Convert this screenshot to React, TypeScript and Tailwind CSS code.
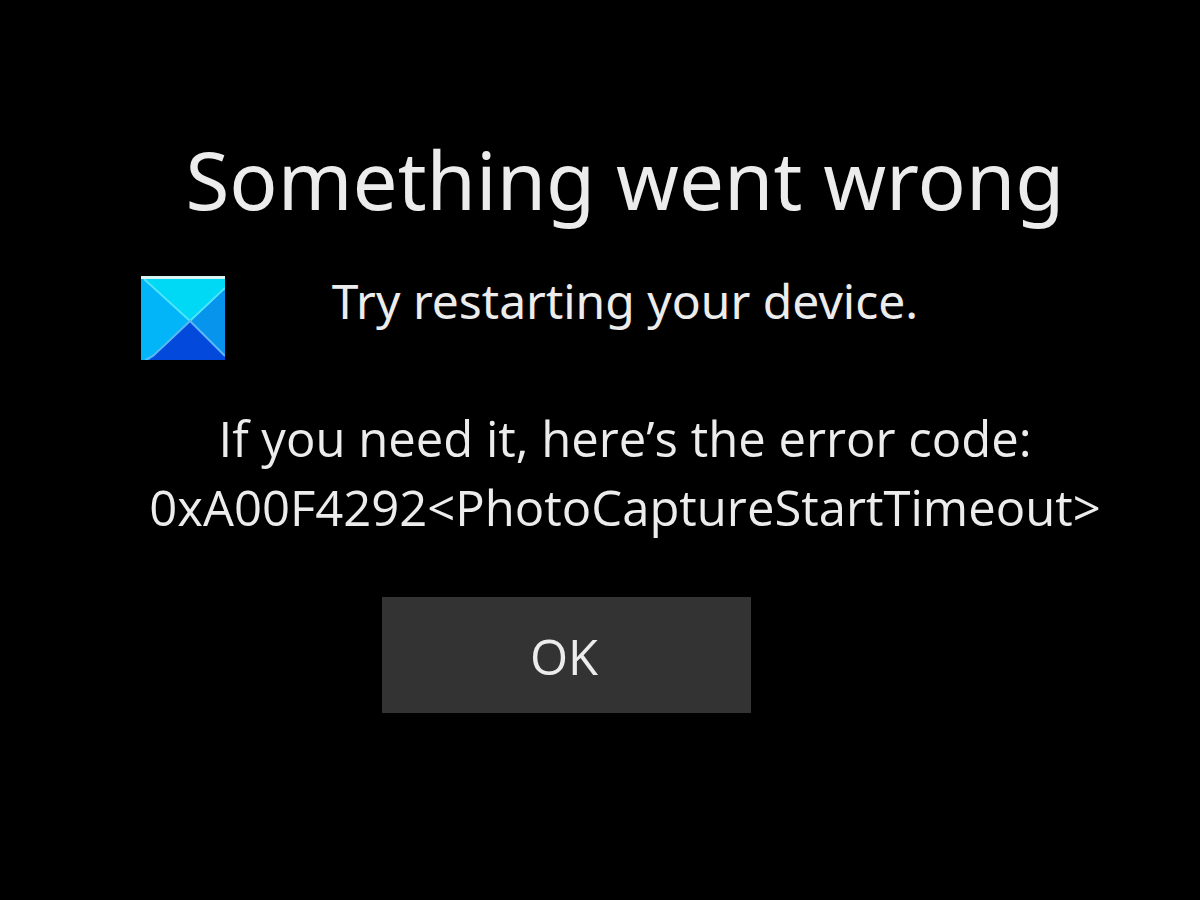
function BrandMark() {
  return (
    <svg viewBox="0 0 84 84" className="h-[84px] w-[84px]" aria-hidden="true">
      <rect width="84" height="84" fill="#02b5f8" />
      <path d="M3 3H84V12L49 45Z" fill="#00d9f6" />
      <path d="M84 12V80L49 45Z" fill="#0794ed" />
      <path d="M49 45L84 80V84H8L28 65Z" fill="#0249dc" />
      <path d="M3 3L49 45L84 12" fill="none" stroke="#50e4fb" strokeWidth="2" />
      <path d="M4 84L12 80L29 64L49 45L84 80" fill="none" stroke="#5cb6f4" strokeWidth="2" />
      <rect width="84" height="3" fill="#d9f3f3" />
    </svg>
  );
}

export default function App() {
  return (
    <main className="flex min-h-screen flex-col items-center bg-black pt-[131px] pl-[50px] font-['Open_Sans','Noto_Sans',sans-serif] text-[#ececec]">
      <h1 className="font-['Noto_Sans','Open_Sans',sans-serif] text-[80px] leading-[96px]">
        Something went wrong
      </h1>
      <div className="mt-[39px] w-full max-w-[968px] text-center text-[49px] leading-[69px]">
        <div className="grid h-[138px] grid-cols-[84px_1fr_84px]">
          <div className="pt-[10px]">
            <BrandMark />
          </div>
          <p className="font-['Noto_Sans','Open_Sans',sans-serif] text-[48px]">
            Try restarting your device.
          </p>
        </div>
        <p>If you need it, here’s the error code:</p>
        <p>0xA00F4292&lt;PhotoCaptureStartTimeout&gt;</p>
      </div>
      <button
        type="button"
        className="mt-[55px] mr-[118px] h-[116px] w-[369px] bg-[#333333] pt-1 pr-1 text-[49px]"
      >
        OK
      </button>
    </main>
  );
}
